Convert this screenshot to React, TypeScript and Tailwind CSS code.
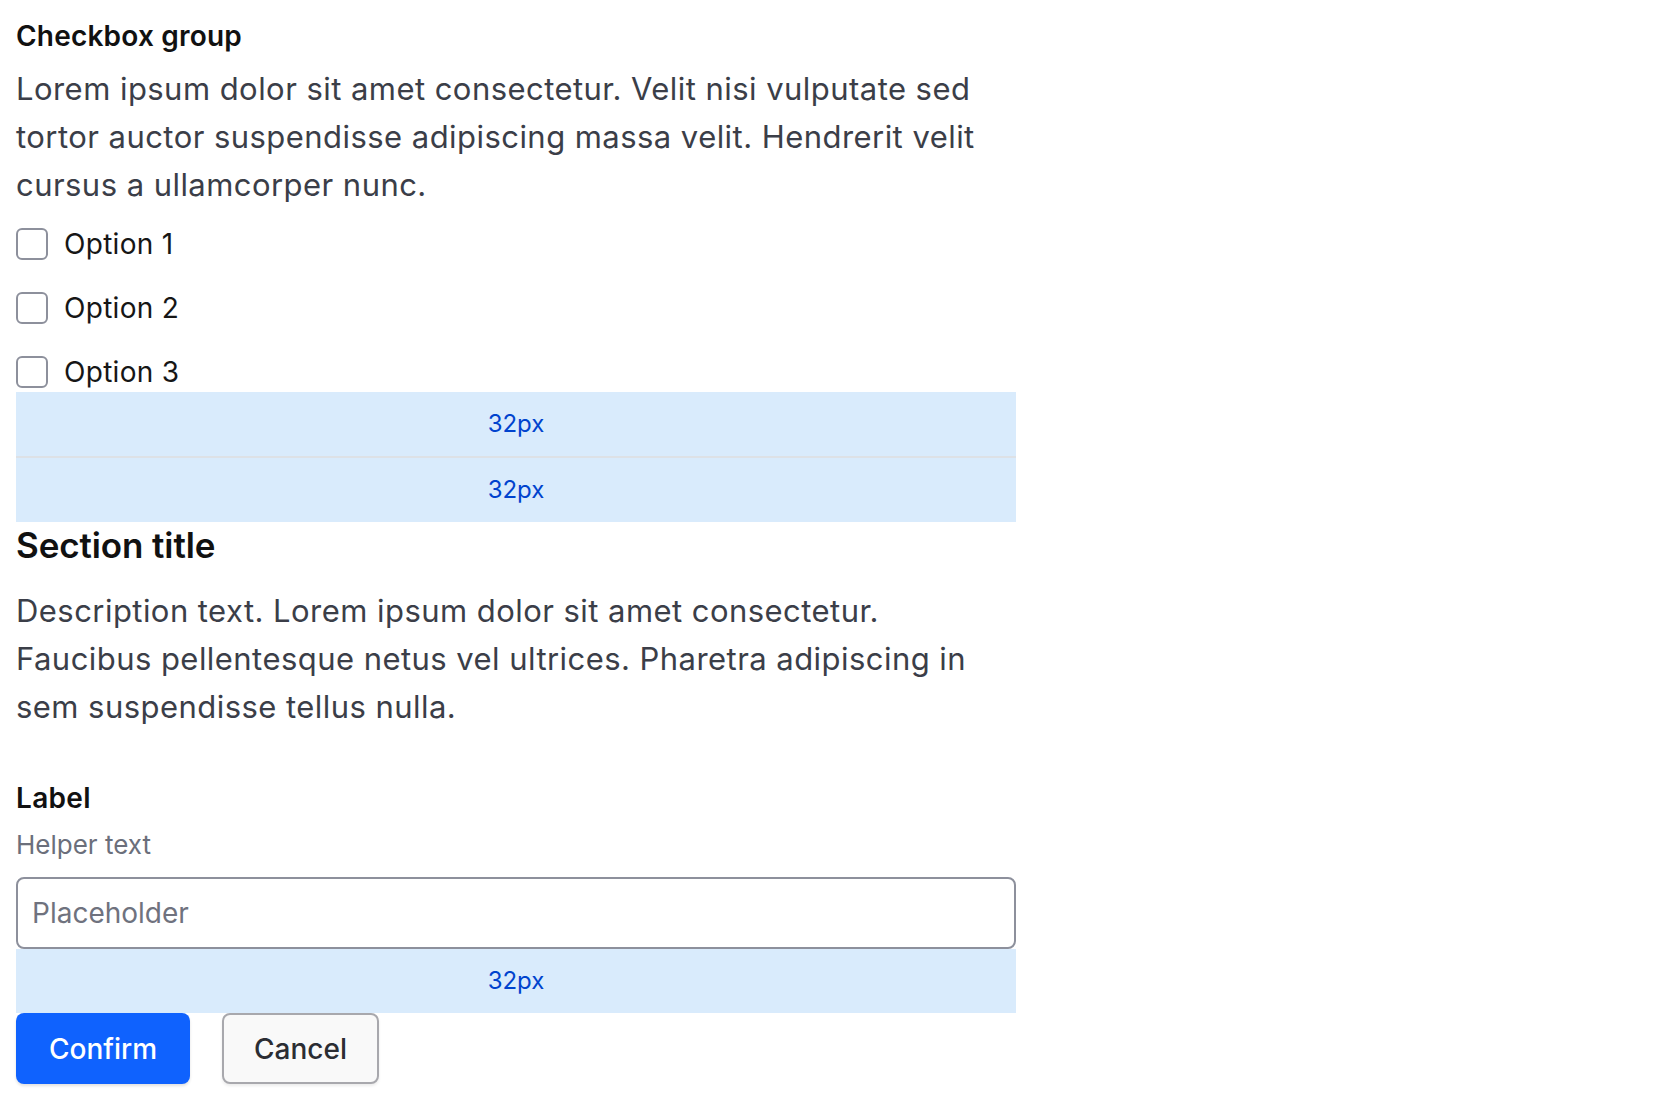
import React from "react";

const font = { fontFamily: "Inter, 'Noto Sans', sans-serif" };

function Band() {
  return (
    <div className="h-[64px] bg-[#d9ebfc] flex items-center justify-center text-[24px] text-[#0043ce] leading-none">
      32px
    </div>
  );
}

function Option({ label }: { label: string }) {
  return (
    <label className="flex items-center h-[40px] gap-[16px]">
      <span className="w-[32px] h-[32px] rounded-[6px] border-2 border-[#8d909c] bg-white shrink-0" />
      <span className="text-[28px] leading-[40px] tracking-[0.3px] text-[#161616]">{label}</span>
    </label>
  );
}

export default function App() {
  return (
    <div className="bg-white min-h-screen" style={font}>
      <div className="w-[1000px] ml-[16px] pt-[18px] flex flex-col">
        <h2 className="text-[28px] leading-[36px] tracking-[0.2px] font-semibold text-[#111111]">Checkbox group</h2>
        <p className="mt-[11px] text-[31px] leading-[48px] tracking-[0.45px] text-[#3b3e48]">
          Lorem ipsum dolor sit amet consectetur. Velit nisi vulputate sed
          <br />
          tortor auctor suspendisse adipiscing massa velit. Hendrerit velit
          <br />
          cursus a ullamcorper nunc.
        </p>
        <div className="mt-[15px] flex flex-col gap-[24px]">
          <Option label="Option 1" />
          <Option label="Option 2" />
          <Option label="Option 3" />
        </div>
        <Band />
        <div className="h-[2px] bg-[#dde1e6]" />
        <Band />
        <h3 className="text-[35px] leading-[46px] tracking-[-0.1px] font-semibold text-[#111111]">Section title</h3>
        <p className="mt-[19px] text-[31px] leading-[48px] tracking-[0.45px] text-[#3b3e48]">
          Description text. Lorem ipsum dolor sit amet consectetur.
          <br />
          Faucibus pellentesque netus vel ultrices. Pharetra adipiscing in
          <br />
          sem suspendisse tellus nulla.
        </p>
        <div className="mt-[49px] text-[28px] leading-[36px] tracking-[0.3px] font-semibold text-[#111111]">Label</div>
        <div className="mt-[13px] text-[26px] leading-[32px] text-[#6b6f7b]">Helper text</div>
        <input
          className="mt-[16px] h-[72px] w-full rounded-[8px] border-2 border-[#8d909c] bg-white px-[14px] text-[28px] text-[#161616] placeholder:text-[#6f727e] outline-none"
          placeholder="Placeholder"
          style={font}
        />
        <Band />
        <div className="flex gap-[32px]">
          <button className="h-[71px] w-[174px] rounded-[8px] bg-[#0f62fe] text-white text-[28px] font-medium shadow-[0_2px_3px_rgba(0,0,0,0.12)]">
            Confirm
          </button>
          <button className="h-[71px] w-[157px] rounded-[8px] border-2 border-[#a8a8ad] bg-[#f9f9f9] text-[#2b2d33] text-[28px] font-medium shadow-[0_2px_3px_rgba(0,0,0,0.08)]">
            Cancel
          </button>
        </div>
      </div>
    </div>
  );
}
